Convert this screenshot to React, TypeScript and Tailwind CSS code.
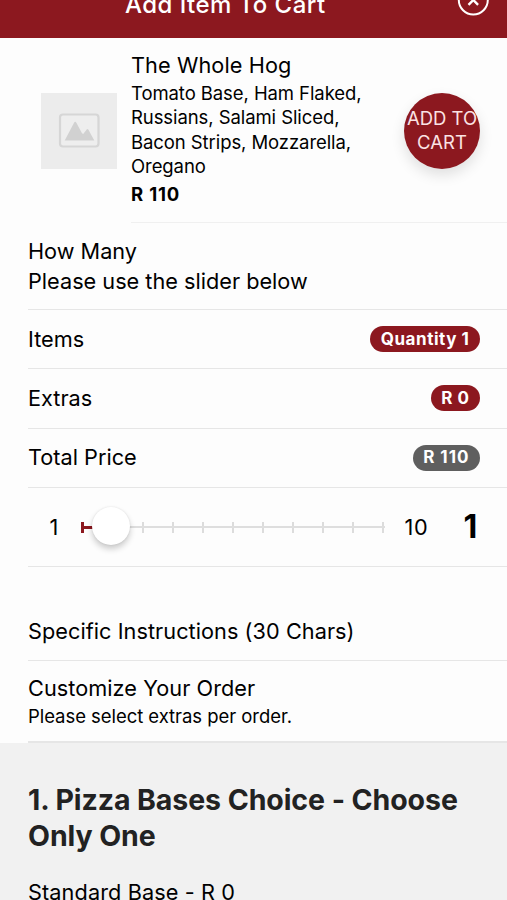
import { useState } from 'react';

type Summary = {
  label: string;
  value: string;
  muted?: boolean;
}

const description = ['Tomato Base, Ham Flaked,', 'Russians, Salami Sliced,', 'Bacon Strips, Mozzarella,', 'Oregano'];

const ticks = [0, 1, 2, 3, 4, 5, 6, 7, 8, 9, 10];

function CloseIcon() {
  return (
    <svg className="h-8 w-8" viewBox="0 0 32 32" fill="none" stroke="white" strokeWidth="2">
      <circle cx="16.300" cy="16" r="14.5" />
      <path d="M11.500 11.200l9.600 9.600M21.100 11.200l-9.600 9.600" strokeWidth="2.4" />
    </svg>
  );
}

function Thumbnail() {
  return (
    <div className="flex h-[76px] w-[76px] shrink-0 items-center justify-center bg-[#ececec]">
      <svg className="h-[36px] w-[42px]" viewBox="0 0 42 36">
        <rect x="2" y="1.5" width="38.500" height="32" rx="3" fill="#eeeeee" stroke="#d6d6d6" strokeWidth="2.2" />
        <path d="M6.700 27.500L16.200 9.500q1-1.600 2 0L24 20.200l1.200.8 3.500-4.500q.8-.8 1.600 0L36.300 27.500z" fill="#d1d1d1" />
      </svg>
    </div>
  );
}

function SummaryRow({ row }: { row: Summary }) {
  return (
    <div className="ml-7 flex h-[59.300px] items-center justify-between border-b border-[#e6e6e6] pr-[27px]">
      <span className="text-[21.700px]">{row.label}</span>
      <span className={`flex h-[26px] items-center rounded-full px-[10.500px] pt-px text-[17px] font-bold text-white ${row.muted ? 'bg-[#5f5f5f] tracking-[1px]' : 'bg-[#8c181f] tracking-[0.55px]'}`}>
        {row.value}
      </span>
    </div>
  );
}

function QuantitySlider({ quantity }: { quantity: number }) {
  return (
    <div className="ml-7 flex h-[79px] items-center border-b border-[#e6e6e6]">
      <span className="w-[52.500px] pl-[21.500px] text-[21.700px]">1</span>
      <div className="relative top-[0.500px] h-10 w-[304px] shrink-0">
        <div className="flex h-full items-center justify-between">
          {ticks.map((tick) => (
            <span key={tick} className={`h-[11px] ${tick === 0 ? 'w-[3px] bg-[#8c181f]' : 'w-[2px] bg-[#dcdcdc]'}`} />
          ))}
        </div>
        <div className="absolute inset-x-0 top-[19px] h-[2px] bg-[#dedede]" />
        <div className="absolute left-0 top-[19px] h-[2.500px] bg-[#8c181f]" style={{ width: `${quantity * 10}%` }} />
        <div
          className="absolute top-0 -ml-[18.500px] h-[38px] w-[38px] rounded-full bg-white shadow-[0_4px_6px_rgba(0,0,0,0.2),0_0_2px_rgba(0,0,0,0.1)]"
          style={{ left: `${quantity * 10}%` }}
        />
      </div>
      <span className="w-[79px] pl-5 text-[21.700px] tracking-[0.8px]">10</span>
      <span className="text-[32px] font-bold">{quantity}</span>
    </div>
  );
}

export default function App() {
  const [quantity] = useState(1);
  const rows: Summary[] = [
    { label: 'Items', value: `Quantity ${quantity}` },
    { label: 'Extras', value: 'R 0' },
    { label: 'Total Price', value: `R ${quantity * 110}`, muted: true },
  ];

  return (
    <main className="h-[900px] w-[507px] overflow-hidden bg-[#fdfdfd] font-['Inter',sans-serif] text-black">
      <header className="flex h-[38px] items-start bg-[#8c181f] text-white">
        <h1 className="-mt-[10px] ml-[125px] whitespace-nowrap text-[24px] font-medium leading-[30px] tracking-[0.450px]">Add Item To Cart</h1>
        <button className="-mt-4 ml-auto mr-[18px]">
          <CloseIcon />
        </button>
      </header>

      {/* Product */}
      <section className="flex h-[185px] pl-[41px]">
        <div className="pt-[55px]">
          <Thumbnail />
        </div>
        <div className="ml-[14px] flex flex-1 border-b border-[#f0f0f0]">
          <div className="pt-3">
            <h2 className="text-[21.700px] leading-[30px] tracking-[0.1px]">The Whole Hog</h2>
            <div className="pt-px text-[18.500px] leading-[24.300px] tracking-[-0.08px]">
              {description.map((line) => (
                <p key={line} className="whitespace-nowrap">{line}</p>
              ))}
            </div>
            <p className="mt-1 text-[18.500px] font-bold leading-6 tracking-[0.8px]">R 110</p>
          </div>
          <button className="ml-auto mr-[27px] mt-[55px] flex h-[76px] w-[76px] shrink-0 items-center justify-center whitespace-nowrap rounded-full bg-[#8c181f] pb-[2px] text-[18.500px] leading-6 text-[#fbe3e4] shadow-[0_6px_14px_rgba(0,0,0,0.12)]">
            ADD TO<br />CART
          </button>
        </div>
      </section>

      <section className="ml-7 h-[87px] border-b border-[#e6e6e6] pt-[14px] text-[21.700px] leading-[29.500px]">
        <p>How Many</p>
        <p>Please use the slider below</p>
      </section>

      {rows.map((row) => (
        <SummaryRow key={row.label} row={row} />
      ))}
      <QuantitySlider quantity={quantity} />

      <section className="ml-7 flex h-[94px] items-end border-b border-[#e6e6e6] pb-[14px]">
        <p className="text-[21.700px] leading-[30px] tracking-[0.050px]">Specific Instructions (30 Chars)</p>
      </section>
      <section className="ml-7 h-[82px] border-b-2 border-[#e6e6e6] pt-3">
        <p className="text-[21.700px] leading-[30px] tracking-[0.050px]">Customize Your Order</p>
        <p className="text-[18.500px] leading-[27px] tracking-[-0.050px]">Please select extras per order.</p>
      </section>

      {/* Options */}
      <section className="h-[160px] bg-[#f1f1f1] pl-7 pt-[39px]">
        <h2 className="w-[460px] text-[28.500px] font-bold leading-[36.500px] tracking-[-0.08px] text-[#222222]">
          1. Pizza Bases Choice - Choose<br />Only One
        </h2>
        <p className="mt-[22px] text-[21.700px] leading-[30px] tracking-[0.1px]">Standard Base - R 0</p>
      </section>
    </main>
  );
}
